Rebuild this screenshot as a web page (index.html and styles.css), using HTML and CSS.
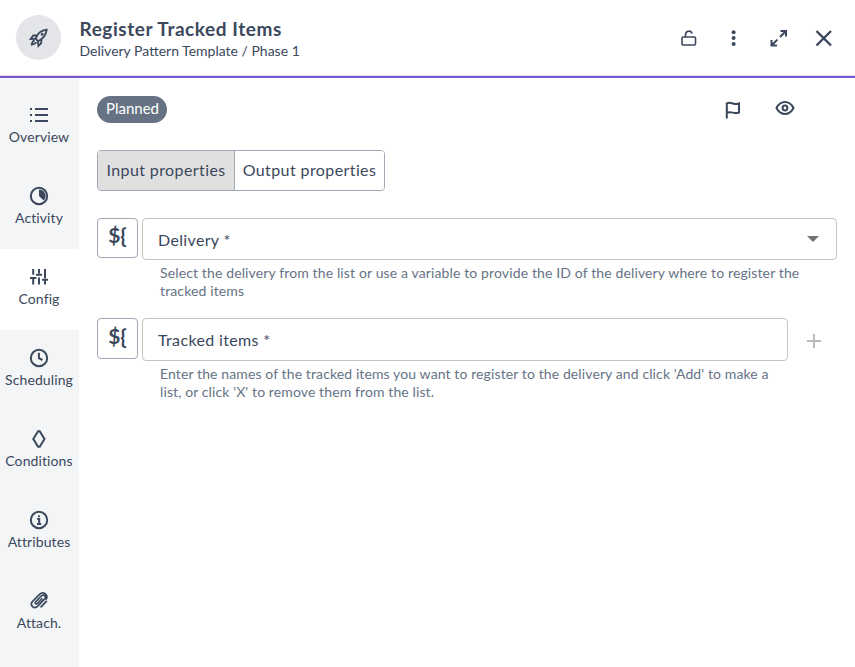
FILE: index.html
```html
<!DOCTYPE html>
<html lang="en">
<head>
<meta charset="utf-8">
<title>Register Tracked Items</title>
<link rel="stylesheet" href="styles.css">
</head>
<body>
<header class="header">
  <div class="avatar">
    <svg class="icon" viewBox="0 0 20 20"><path d="M6.800 10.500C8 6.500 11.500 2.500 17.700 1.700 17 7.500 13.500 11.300 9 13.300ZM7.600 7.500 4.200 7.500 1.600 11 6.500 10.800M12.500 11.700 12.200 15.200 9.400 18 9 13.800M5.600 12.500C3.200 12.800 3.200 14.700 2.800 16.500 4.500 16.200 6.500 16.200 7.300 14"/><circle cx="13.200" cy="6.300" r=".6"/></svg>
  </div>
  <div class="heading">
    <h1 class="title">Register Tracked Items</h1>
    <div class="subtitle">Delivery Pattern Template / Phase 1</div>
  </div>
  <div class="actions">
    <svg class="icon thin" viewBox="0 0 20 20"><rect x="3" y="9" width="13.500" height="8" rx="1"/><path d="M6.500 9V6.200a3.400 3.400 0 0 1 6.600-.7"/></svg>
    <svg class="icon solid" viewBox="0 0 20 20"><circle cx="9.600" cy="4.200" r="2"/><circle cx="9.600" cy="10.100" r="2"/><circle cx="9.600" cy="16" r="2"/></svg>
    <svg class="icon" viewBox="0 0 20 20"><path d="M11 9 17 3M8.400 11.600 2.500 17.500M11.500 3H17V8.500M2.500 12v5.500H8"/></svg>
    <svg class="icon close" viewBox="0 0 20 20"><path d="M2.500 3 17 17.500M17 3 2.500 17.500"/></svg>
  </div>
</header>
<div class="body">
  <nav class="sidebar">
    <a class="tab"><svg class="icon" viewBox="0 0 20 20"><path d="M6 4H19M6 10H19M6 16H19M1 4h2M1 10h2M1 16h2"/></svg><span>Overview</span></a>
    <a class="tab"><svg class="icon" viewBox="0 0 20 20"><circle cx="10" cy="10" r="8.200"/><path class="fill" d="M10 3.500a6.500 6.500 0 0 1 4.600 11.100L10 10Z"/></svg><span>Activity</span></a>
    <a class="tab active"><svg class="icon" viewBox="0 0 20 20"><path d="M4.200 2v5.700M4.200 11v6.500M1 11h6.400M10 2v4.500M7 7.700h6M10 10.500v7M16 2v9.200M16 13.500v4M13 12.700h6"/></svg><span>Config</span></a>
    <a class="tab"><svg class="icon" viewBox="0 0 20 20"><circle cx="10" cy="10" r="8.200"/><path d="M9.900 4.800v5.400l3.600 1.800"/></svg><span>Scheduling</span></a>
    <a class="tab"><svg class="icon" viewBox="0 0 20 20"><path d="M9.100 2.200h1.600L15.500 10 10.700 17.800H9.100L4.300 10Z"/></svg><span>Conditions</span></a>
    <a class="tab"><svg class="icon" viewBox="0 0 20 20"><circle cx="10" cy="10" r="8.200"/><path d="M8.300 9h1.900v5M8 14h4.200M9 6.300h1.800"/></svg><span>Attributes</span></a>
    <a class="tab"><svg class="icon clip" viewBox="0 0 20 20"><path d="M13.300 7.400 8.500 12.500c-1.300 1.300-3-.4-1.700-1.700l5.500-5.800c2.500-2.400 5.400.6 3.200 3.100l-6.700 7.100c-3.700 3.500-8.600-.9-5.200-4.900L10.800 3.100c3.500-3.300 9.500 1.200 5.900 5.600M17.800 9.800l-6.200 6.500"/></svg><span>Attach.</span></a>
  </nav>
  <main class="content">
    <div class="status">
      <span class="badge">Planned</span>
      <div class="status-actions">
        <svg class="icon flag" viewBox="0 0 20 20"><path d="M3.800 18.500V3.500C8.500 1 11.300 5.800 16 3.500v9C11.300 14.800 8.500 10.500 3.800 12.800"/></svg>
        <svg class="icon" viewBox="0 0 20 20"><path d="M1.500 10C5.500 2 14.500 2 18.500 10 14.500 18 5.500 18 1.500 10Z"/><circle cx="10" cy="10" r="2.400"/></svg>
      </div>
    </div>
    <div class="toggle"><button class="option selected">Input properties</button><button class="option">Output properties</button></div>
    <section class="row delivery">
      <button class="variable">${</button>
      <div class="control">
        <div class="field select"><span>Delivery <i class="star">*</i></span><svg class="caret" viewBox="0 0 12 6"><path d="M0 0h12L6 6Z"/></svg></div>
        <p class="help">Select the delivery from the list or use a variable to provide the ID of the delivery where to register the<br>tracked items</p>
      </div>
    </section>
    <section class="row tracked">
      <button class="variable">${</button>
      <div class="control">
        <div class="field"><span>Tracked items <i class="star">*</i></span></div>
        <p class="help second">Enter the names of the tracked items you want to register to the delivery and click 'Add' to make a<br>list, or click 'X' to remove them from the list.</p>
      </div>
      <svg class="add" viewBox="0 0 14 14"><path d="M7 0v14M0 7h14"/></svg>
    </section>
  </main>
</div>
</body>
</html>
```
FILE: styles.css
```css
* { box-sizing: border-box; }
body { margin: 0; height: 667px; overflow: hidden; background: #fff; color: #3b485c; font-family: Lato, sans-serif; display: flex; flex-direction: column; }
button { font: inherit; color: inherit; margin: 0; }
.icon { display: block; width: 20px; height: 20px; flex: none; fill: none; stroke: #3b485c; stroke-width: 2; }
.icon .fill, .solid { fill: #3b485c; stroke: none; }
.thin { stroke-width: 1.6; }
.clip { stroke-width: 1.7; }
.header { height: 78px; flex: none; display: flex; padding: 15px 21px 0 16px; border-bottom: 2px solid #7957d0; box-shadow: inset 0 -1px #dedee8; }
.avatar { width: 45px; height: 45px; border-radius: 50%; background: #e3e5e9; display: flex; align-items: center; justify-content: center; }
.avatar .icon { stroke-width: 1.8; }
.heading { margin-left: 18.5px; padding-top: 2px; white-space: nowrap; }
.title { margin: 0; font-size: 19px; line-height: 24px; font-weight: 700; letter-spacing: .56px; }
.subtitle { font-size: 14px; line-height: 20px; }
.actions { margin: 13px 0 0 auto; display: flex; gap: 25px; height: 20px; }
.close { stroke-width: 2.4; }
.body { flex: 1; display: flex; }
.sidebar { width: 79px; flex: none; background: #f3f5f7; padding-top: 9px; }
.tab { height: 81px; display: flex; flex-direction: column; align-items: center; padding: 18px 1px 0 0; font-size: 14px; line-height: 20px; letter-spacing: .1px; gap: 2px; }
.active { background: #fff; }
.content { flex: 1; min-width: 0; padding: 18px 18px 0; }
.status { display: flex; justify-content: space-between; height: 27px; }
.badge { width: 70px; height: 27px; padding-left: 1px; border-radius: 14px; background: #667385; color: #fff; font-size: 15px; line-height: 25px; text-align: center; }
.status-actions { display: flex; gap: 32px; padding: 2px 42px 0 0; }
.flag { margin-top: 2px; }
.toggle { margin-top: 27px; width: 288px; height: 41px; display: flex; border: 1px solid #a0a9b5; border-radius: 4px; overflow: hidden; }
.option { flex: 1; padding: 0 0 2px; border: 0; background: #fff; font-size: 16px; letter-spacing: .4px; white-space: nowrap; }
.selected { flex: 0 0 137px; background: #e0e0e0; border-right: 1px solid #a0a9b5; }
.row { display: flex; gap: 4px; }
.delivery { margin-top: 27px; }
.tracked { margin-top: 18px; }
.variable { width: 41px; height: 41px; flex: none; border: 1px solid #a0a9b5; border-radius: 4px; background: #fff; font-size: 21px; font-weight: 700; line-height: 24px; padding: 0 0 6px; }
.delivery .variable { height: 40px; }
.control { flex: 1; min-width: 0; }
.field { height: 43px; border: 1px solid #c4c4c4; border-radius: 4px; display: flex; align-items: center; justify-content: space-between; padding: 0 17px 0 15px; font-size: 16px; letter-spacing: .35px; }
.select { height: 42px; }
.star { font-style: normal; }
.caret { width: 12px; height: 6px; fill: #757575; margin-top: -1px; }
.help { margin: 4px 0 0 18px; color: #667385; font-size: 14px; line-height: 18px; white-space: nowrap; letter-spacing: .13px; }
.second { letter-spacing: .11px; }
.add { width: 14px; height: 14px; margin: 16px 16px 0 15px; flex: none; stroke: #bbb; stroke-width: 2; }
```
